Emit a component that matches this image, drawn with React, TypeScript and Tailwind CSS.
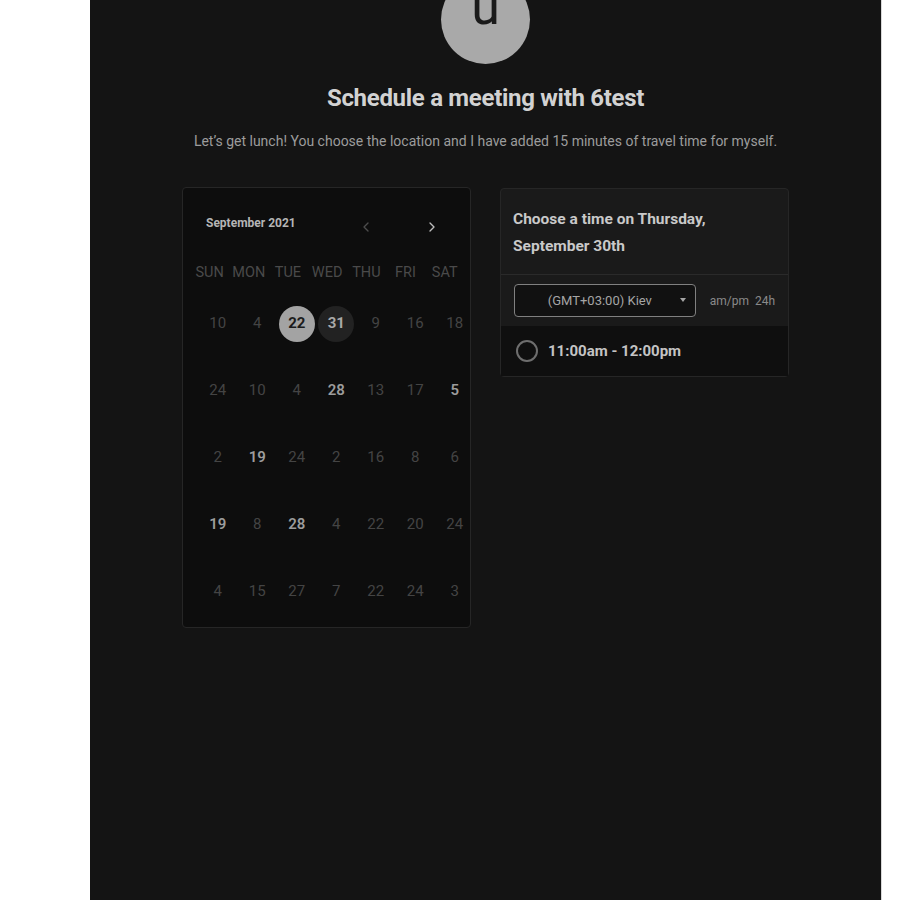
import { ChevronLeft, ChevronRight } from 'lucide-react';

type Day = { n: number; tone?: 'bright' | 'selected' | 'marked' };

const weekDays = ['SUN', 'MON', 'TUE', 'WED', 'THU', 'FRI', 'SAT'];

const weeks: Day[][] = [
  [{ n: 10 }, { n: 4 }, { n: 22, tone: 'selected' }, { n: 31, tone: 'marked' }, { n: 9 }, { n: 16 }, { n: 18 }],
  [{ n: 24 }, { n: 10 }, { n: 4 }, { n: 28, tone: 'bright' }, { n: 13 }, { n: 17 }, { n: 5, tone: 'bright' }],
  [{ n: 2 }, { n: 19, tone: 'bright' }, { n: 24 }, { n: 2 }, { n: 16 }, { n: 8 }, { n: 6 }],
  [{ n: 19, tone: 'bright' }, { n: 8 }, { n: 28, tone: 'bright' }, { n: 4 }, { n: 22 }, { n: 20 }, { n: 24 }],
  [{ n: 4 }, { n: 15 }, { n: 27 }, { n: 7 }, { n: 22 }, { n: 24 }, { n: 3 }],
];

function DayCell({ day }: { day: Day }) {
  if (day.tone === 'selected') {
    return (
      <div className="flex h-[36px] w-[36px] items-center justify-center rounded-full bg-[#a3a3a3] text-[15px] font-bold text-[#1c1c1c]">
        {day.n}
      </div>
    );
  }
  if (day.tone === 'marked') {
    return (
      <div className="flex h-[36px] w-[36px] items-center justify-center rounded-full bg-[#222222] text-[15px] font-bold text-[#a8a8a8]">
        {day.n}
      </div>
    );
  }
  return (
    <span
      className={
        day.tone === 'bright'
          ? 'text-[15px] font-semibold text-[#9c9c9c]'
          : 'text-[15px] text-[#444444]'
      }
    >
      {day.n}
    </span>
  );
}

export default function App() {
  return (
    <div
      className="flex h-[900px] w-full bg-white"
      style={{ fontFamily: 'Roboto, "Liberation Sans", sans-serif' }}
    >
      <div className="ml-[90px] flex h-full w-[791px] flex-col items-center overflow-hidden bg-[#141414]">
        <div className="mt-[-25px] flex h-[89px] w-[89px] shrink-0 items-center justify-center rounded-full bg-[#a9a9a9]">
          <span className="mb-[26px] text-[52px] leading-none text-[#1a1a1a]">u</span>
        </div>

        <h1 className="mt-[19px] text-[24px] font-bold leading-[30px] tracking-[-0.3px] text-[#d2d2d2]">
          Schedule a meeting with 6test
        </h1>
        <p className="mt-[18px] text-[14px] leading-[20px] text-[#9c9c9c]">
          Let’s get lunch! You choose the location and I have added 15 minutes of travel time for myself.
        </p>

        <div className="mt-[36px] flex w-[607px] items-start justify-between">
          {/* calendar */}
          <div className="flex h-[441px] w-[289px] flex-col rounded-sm border border-[#262626] bg-[#0d0d0d]">
            <div className="flex h-[68px] items-center pl-[23px] pt-[2px]">
              <span className="text-[12px] font-bold text-[#b5b5b5]">September 2021</span>
              <ChevronLeft className="ml-[62px] mt-[8px] h-[16px] w-[16px] text-[#4d4d4d]" strokeWidth={2} />
              <ChevronRight className="ml-[50px] mt-[8px] h-[16px] w-[16px] text-[#bdbdbd]" strokeWidth={2} />
            </div>
            <div className="grid grid-cols-[repeat(7,39.2px)] pl-[7px]">
              {weekDays.map((d) => (
                <div key={d} className="flex h-[34px] items-start justify-center pt-[6px] text-[14.5px] text-[#4a4a4a]">
                  {d}
                </div>
              ))}
            </div>
            <div className="grid grid-cols-[repeat(7,39.5px)] pl-[15px]">
              {weeks.flat().map((day, i) => (
                <div key={i} className="flex h-[67px] items-center justify-center">
                  <DayCell day={day} />
                </div>
              ))}
            </div>
          </div>

          {/* time picker */}
          <div className="mt-[1px] flex w-[289px] flex-col rounded-sm border border-[#262626] bg-[#1a1a1a]">
            <div className="border-b border-[#2a2a2a] px-[12px] pb-[14px] pt-[17px]">
              <p className="text-[15.5px] font-bold leading-[27px] text-[#c9c9c9]">
                Choose a time on Thursday,
                <br />
                September 30th
              </p>
            </div>
            <div className="flex items-center px-[13px] py-[9px]">
              <div className="relative flex h-[33px] w-[185px] items-center justify-center rounded-sm border border-[#808080] bg-[#111111] text-[13px] text-[#a5a5a5]">
                <span className="-ml-[10px]">(GMT+03:00) Kiev</span>
                <span className="absolute right-[9px] top-[13px] h-0 w-0 border-x-[3px] border-t-[4px] border-x-transparent border-t-[#a5a5a5]" />
              </div>
              <span className="ml-[14px] text-[12px] text-[#8a8a8a]">am/pm&nbsp;&nbsp;24h</span>
            </div>
            <div className="flex h-[50px] items-center bg-[#0f0f0f] pl-[15px]">
              <span className="h-[22px] w-[22px] rounded-full border-2 border-[#6e6e6e]" />
              <span className="ml-[10px] text-[15px] font-bold text-[#c4c4c4]">11:00am - 12:00pm</span>
            </div>
          </div>
        </div>
      </div>
      <div className="h-full w-px bg-[#d8d8d8]" />
    </div>
  );
}
